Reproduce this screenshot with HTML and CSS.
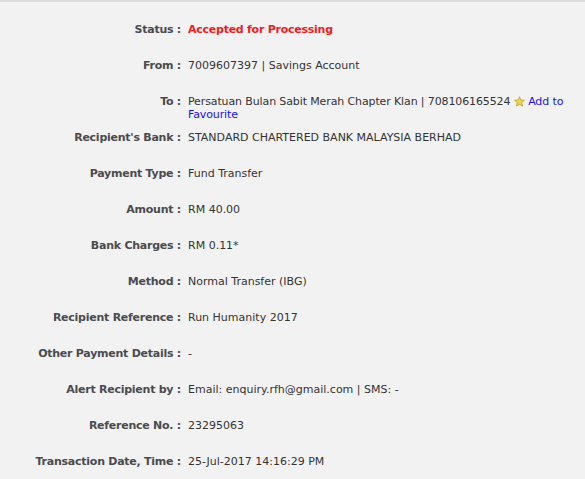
FILE: index.html
```html
<!DOCTYPE html>
<html>
<head>
<meta charset="utf-8">
<link rel="stylesheet" href="styles.css">
</head>
<body>
<div class="page">
  <div class="row"><div class="label">Status :</div><div class="value status">Accepted for Processing</div></div>
  <div class="row"><div class="label">From :</div><div class="value">7009607397 | Savings Account</div></div>
  <div class="row"><div class="label">To :</div><div class="value narrow">Persatuan Bulan Sabit Merah Chapter Klan | 708106165524 <svg class="star" width="11" height="11" viewBox="0 0 24 24"><polygon points="12,1.5 15,8.8 22.8,9.4 16.8,14.5 18.7,22.2 12,18 5.3,22.2 7.2,14.5 1.2,9.4 9,8.8" fill="#f1d54a" stroke="#b59a2a" stroke-width="1.6" stroke-linejoin="round"/></svg> <a class="link">Add to Favourite</a></div></div>
  <div class="row"><div class="label">Recipient's Bank :</div><div class="value">STANDARD CHARTERED BANK MALAYSIA BERHAD</div></div>
  <div class="row"><div class="label">Payment Type :</div><div class="value">Fund Transfer</div></div>
  <div class="row"><div class="label">Amount :</div><div class="value">RM 40.00</div></div>
  <div class="row"><div class="label">Bank Charges :</div><div class="value">RM 0.11*</div></div>
  <div class="row"><div class="label">Method :</div><div class="value">Normal Transfer (IBG)</div></div>
  <div class="row"><div class="label">Recipient Reference :</div><div class="value">Run Humanity 2017</div></div>
  <div class="row"><div class="label">Other Payment Details :</div><div class="value">-</div></div>
  <div class="row"><div class="label">Alert Recipient by :</div><div class="value">Email: enquiry.rfh@gmail.com | SMS: -</div></div>
  <div class="row"><div class="label">Reference No. :</div><div class="value">23295063</div></div>
  <div class="row"><div class="label">Transaction Date, Time :</div><div class="value">25-Jul-2017 14:16:29 PM</div></div>
</div>
</body>
</html>
```
FILE: styles.css
```css
html, body {
  margin: 0;
  padding: 0;
  background: #f2f2f2;
}
.page {
  border-top: 2px solid #dcdcdc;
  padding-top: 21px;
  font-family: "DejaVu Sans", Verdana, sans-serif;
  font-size: 11px;
  line-height: 13px;
  color: #333333;
}
.row {
  display: grid;
  grid-template-columns: 181px 1fr;
  column-gap: 7px;
  height: 36px;
  align-items: start;
}
.label {
  text-align: right;
  font-weight: bold;
  color: #4a4a4f;
  white-space: nowrap;
  letter-spacing: -0.25px;
}
.value {
  padding-right: 8px;
}
.narrow {
  letter-spacing: -0.12px;
}
.status {
  color: #ee1c25;
  font-weight: bold;
  letter-spacing: -0.25px;
}
.link {
  color: #1a0dff;
  cursor: pointer;
}
.star {
  vertical-align: -2px;
}
```
